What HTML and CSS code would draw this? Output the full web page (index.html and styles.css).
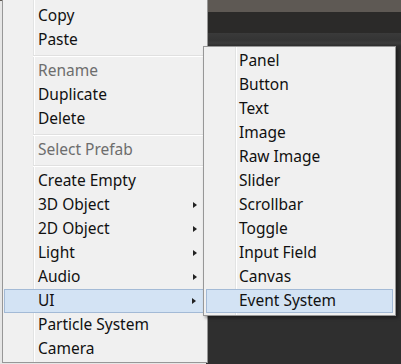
FILE: index.html
```html
<!DOCTYPE html>
<html lang="en">
<head>
    <meta charset="UTF-8">
    <meta name="viewport" content="width=device-width, initial-scale=1.0">
    <title>Context Menu</title>
    <link rel="stylesheet" href="styles.css">
</head>
<body>
    <div class="screen">
        <div class="menu main-menu">
            <div class="item">Copy</div>
            <div class="item">Paste</div>
            <div class="sep"></div>
            <div class="item disabled">Rename</div>
            <div class="item">Duplicate</div>
            <div class="item">Delete</div>
            <div class="sep"></div>
            <div class="item disabled">Select Prefab</div>
            <div class="sep"></div>
            <div class="item">Create Empty</div>
            <div class="item more">3D Object</div>
            <div class="item more">2D Object</div>
            <div class="item more">Light</div>
            <div class="item more">Audio</div>
            <div class="item more active">UI</div>
            <div class="item">Particle System</div>
            <div class="item">Camera</div>
        </div>
        <div class="menu sub-menu">
            <div class="item">Panel</div>
            <div class="item">Button</div>
            <div class="item">Text</div>
            <div class="item">Image</div>
            <div class="item">Raw Image</div>
            <div class="item">Slider</div>
            <div class="item">Scrollbar</div>
            <div class="item">Toggle</div>
            <div class="item">Input Field</div>
            <div class="item">Canvas</div>
            <div class="item active">Event System</div>
        </div>
    </div>
</body>
</html>
```

FILE: styles.css
```css
body {
    margin: 0;
    font-family: "Noto Sans", "Open Sans", sans-serif;
    font-size: 15.5px;
    color: #111;
}
.screen {
    position: relative;
    width: 401px;
    height: 364px;
    overflow: hidden;
    background: linear-gradient(#5e5954 0, #5e5954 12px, #2b2a29 12px, #2b2a29 33px, #3a3a3a 33px, #343434 40px, #3c3c3c 43px, #2f2f2f 46px, #2f2f2f 100%);
}
.menu {
    background-color: #f0f0f0;
    border: 1px solid #979797;
    box-sizing: border-box;
}
.main-menu {
    width: 206px;
    height: 363px;
    margin-left: 2px;
    padding-top: 4px;
    border-top: none;
    box-shadow: -2px 1px 0 #e6e6e6;
    background-image: linear-gradient(90deg, transparent 30px, #e2e3e3 30px, #e2e3e3 31px, #fff 31px, #fff 32px, transparent 32px);
}
.sub-menu {
    position: absolute;
    left: 203px;
    top: 46px;
    width: 193px;
    height: 270px;
    padding-top: 2px;
    box-shadow: 2px 2px 3px rgba(0, 0, 0, 0.4);
    background-image: linear-gradient(90deg, transparent 31px, #e2e3e3 31px, #e2e3e3 32px, #fff 32px, #fff 33px, transparent 33px);
}
.item {
    position: relative;
    height: 22px;
    line-height: 22px;
    padding-bottom: 2px;
    padding-left: 35px;
    white-space: nowrap;
}
.disabled {
    color: #6d6d6d;
}
.active {
    background: #d3e3f4;
    border: 1px solid #a3bad6;
    height: 21px;
    line-height: 21px;
    padding-bottom: 1px;
    padding-left: 33px;
    margin: 0 1px;
}
.sub-menu .active {
    margin: 0 2px;
    padding-left: 32px;
}
.more::after {
    content: "";
    position: absolute;
    right: 10px;
    top: 9px;
    border-left: 4px solid #222;
    border-top: 3.5px solid transparent;
    border-bottom: 3.5px solid transparent;
}
.active.more::after {
    top: 8px;
    right: 9px;
}
.sep {
    height: 7px;
    margin-left: 30px;
    margin-right: 3px;
    background: linear-gradient(transparent 3px, #e0e0e0 3px, #e0e0e0 4px, #fff 4px, #fff 5px, transparent 5px);
}
```
